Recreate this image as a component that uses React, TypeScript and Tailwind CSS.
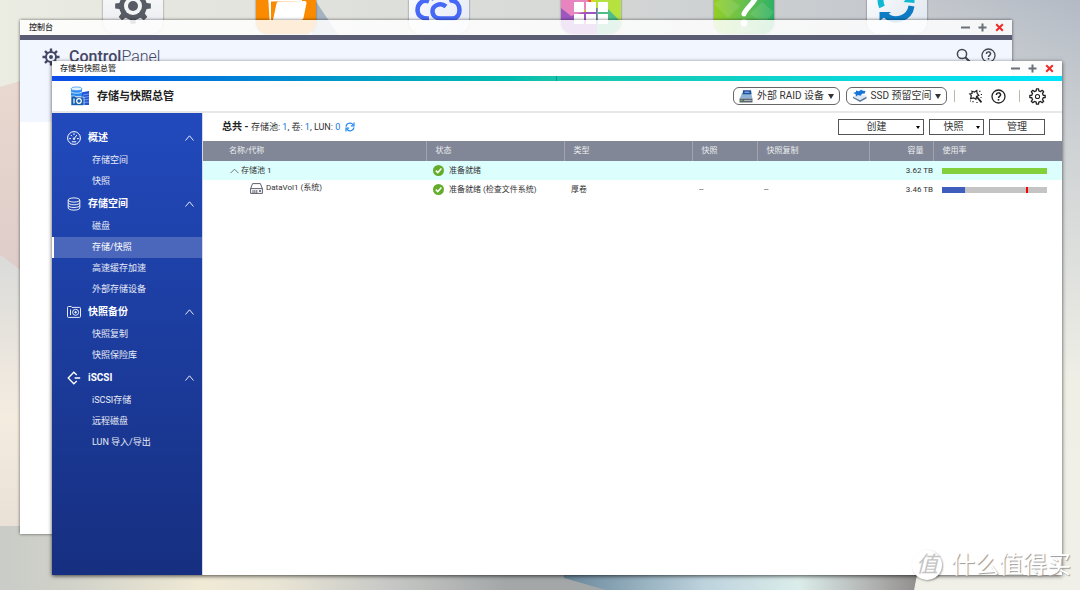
import React, { useState } from "react";
import clsx from "clsx";

interface NavGroup {
  title: string;
  icon: React.ReactNode;
  items: string[];
}

interface VolumeRow {
  name: string;
  kind: "pool" | "volume";
  status: string;
  type: string;
  snapshot: string;
  replica: string;
  capacity: string;
  used: number;
  threshold?: number;
}

// Outline of a cog centred on (c, c)
function gearPath(c: number, teeth: number, inner: number, outer: number) {
  const step = (Math.PI * 2) / teeth;
  const points: string[] = [];
  for (let i = 0; i < teeth; i++) {
    const a = i * step - Math.PI / 2;
    const corners = [
      [a - step * 0.28, inner],
      [a - step * 0.17, outer],
      [a + step * 0.17, outer],
      [a + step * 0.28, inner],
    ];
    corners.forEach(([angle, r]) => {
      points.push(`${(c + r * Math.cos(angle)).toFixed(2)} ${(c + r * Math.sin(angle)).toFixed(2)}`);
    });
  }
  return `M${points.join("L")}Z`;
}

const navGroups: NavGroup[] = [
  {
    title: "概述",
    icon: (
      <svg viewBox="0 0 14 14" className="size-[14px]" fill="none" stroke="currentColor">
        <circle cx="7" cy="7" r="6.4" />
        <path d="M2.6 7.6h1M10.4 7.6h1M4 4.2l.7.7M7 2.6v1M9.6 4.4L7.6 7" strokeLinecap="round" />
        <circle cx="7" cy="7.8" r=".8" />
        <path d="M4.8 10.8h4.4" />
      </svg>
    ),
    items: ["存储空间", "快照"],
  },
  {
    title: "存储空间",
    icon: (
      <svg viewBox="0 0 14 14" className="size-[14px]" fill="none" stroke="currentColor" strokeWidth="0.9">
        <ellipse cx="7" cy="3" rx="5.8" ry="2.1" />
        <path d="M1.2 3v8c0 1.200 2.600 2.100 5.800 2.100s5.800-.9 5.800-2.100V3M1.200 5.700c0 1.200 2.600 2.100 5.800 2.100s5.800-.9 5.800-2.100M1.200 8.400c0 1.200 2.600 2.100 5.800 2.100s5.800-.9 5.800-2.100" />
      </svg>
    ),
    items: ["磁盘", "存储/快照", "高速缓存加速", "外部存储设备"],
  },
  {
    title: "快照备份",
    icon: (
      <svg viewBox="0 0 14 14" className="size-[14px]" fill="none" stroke="currentColor" strokeWidth="0.9">
        <path d="M.5 2.800V11.500q0 .9.9.9h11.200q.9 0 .9-.9V3.300q0-.9-.9-.9H5L4.300 1.500H1.400q-.9 0-.9.9z" />
        <path d="M3.500 4.500v5.600" />
        <circle cx="8.600" cy="7.300" r="3" />
        <circle cx="8.600" cy="7.300" r=".8" fill="currentColor" />
      </svg>
    ),
    items: ["快照复制", "快照保险库"],
  },
  {
    title: "iSCSI",
    icon: (
      <svg viewBox="0 0 14 14" className="size-[14px]" fill="none" stroke="currentColor" strokeWidth="1.300">
        <path d="M9.800 4L6.800 1.200 1.200 7l5.600 5.800 3-2.800M7.600 7h5.600" />
      </svg>
    ),
    items: ["iSCSI存储", "远程磁盘", "LUN 导入/导出"],
  },
];

const rows: VolumeRow[] = [
  { name: "存储池 1", kind: "pool", status: "准备就绪", type: "", snapshot: "", replica: "", capacity: "3.62 TB", used: 100 },
  { name: "DataVol1 (系统)", kind: "volume", status: "准备就绪 (检查文件系统)", type: "厚卷", snapshot: "--", replica: "--", capacity: "3.46 TB", used: 22, threshold: 80 },
];

function Wallpaper() {
  return (
    <svg viewBox="0 0 1080 590" preserveAspectRatio="none" className="absolute inset-0 size-full" aria-hidden="true">
      <defs>
        <linearGradient id="sky" x1="0" x2="1" y1="0" y2="0">
          <stop offset="0" stopColor="#ebece2" />
          <stop offset="0.5" stopColor="#d8dad8" />
          <stop offset="0.85" stopColor="#c3c7cc" />
          <stop offset="1" stopColor="#b3bac5" />
        </linearGradient>
        <linearGradient id="haze" x1="0" x2="0" y1="0" y2="1">
          <stop offset="0" stopColor="#f1f0e8" stopOpacity="0" />
          <stop offset="0.35" stopColor="#e3e4e0" stopOpacity="0.75" />
          <stop offset="0.65" stopColor="#efefe6" />
          <stop offset="1" stopColor="#f1f0e8" />
        </linearGradient>
        <linearGradient id="sand" x1="0" x2="0" y1="0" y2="1">
          <stop offset="0" stopColor="#dadbda" />
          <stop offset="0.6" stopColor="#f5ece0" />
          <stop offset="1" stopColor="#e9e1d6" />
        </linearGradient>
        <linearGradient id="peach" x1="0" x2="0" y1="0" y2="1">
          <stop offset="0" stopColor="#ead9d0" />
          <stop offset="1" stopColor="#dccbc8" />
        </linearGradient>
        <linearGradient id="floor" x1="0" x2="1" y1="0" y2="0">
          <stop offset="0" stopColor="#c9ccc7" />
          <stop offset="0.08" stopColor="#d1d2c9" />
          <stop offset="0.22" stopColor="#f0ead5" />
          <stop offset="0.3" stopColor="#e9e5d5" />
          <stop offset="0.42" stopColor="#c8c9c6" />
          <stop offset="0.55" stopColor="#a3a7a8" />
          <stop offset="1" stopColor="#a3a7a8" />
        </linearGradient>
        <linearGradient id="lake" x1="0" x2="1" y1="0" y2="0">
          <stop offset="0" stopColor="#68869a" />
          <stop offset="0.4" stopColor="#bdd3dd" />
          <stop offset="0.66" stopColor="#dbedea" />
          <stop offset="0.85" stopColor="#b4b7b6" />
          <stop offset="1" stopColor="#908d8b" />
        </linearGradient>
      </defs>
      <rect width="1080" height="590" fill="url(#sky)" />
      <rect x="900" width="180" height="590" fill="url(#haze)" />
      <path d="M312 0h3l24 36h-27z" fill="#a5b3c1" />
      <path d="M0 255l60 45v226H0z" fill="url(#sand)" />
      <path d="M0 87l60-18v231L0 255z" fill="url(#peach)" />
      <path d="M0 526h920l-6 64H0z" fill="url(#floor)" />
      <path d="M562 560h358l-6 30H606l-42-12z" fill="url(#lake)" />
    </svg>
  );
}

function DesktopIcons() {
  const tile = "block size-[60px] rounded-xl shadow-[0_0_2px_rgba(0,0,0,0.6)] overflow-hidden";
  return (
    <div className="absolute -top-[26px] left-[103px] right-[153px] flex justify-between">
      <button className={clsx(tile, "bg-linear-to-b from-white to-[#e8eaee]")} aria-label="控制台">
        <svg viewBox="0 0 60 60">
          <path d={gearPath(30, 8, 14, 18)} fill="#565b64" transform="translate(0 2)" />
          <circle cx="30" cy="32" r="9" fill="#f4f5f7" />
          <circle cx="30" cy="32" r="5" fill="#565b64" />
        </svg>
      </button>
      <button className={clsx(tile, "bg-[#fa8a00]")} aria-label="File Station">
        <svg viewBox="0 0 60 60" fill="#fff">
          <path d="M20.500 29.500q.3-2 2.300-2l26-.5q2 0 1.700 2l-3 15q-.4 2-2.400 2H17z" />
          <path d="M12 20h7l3 4h24v3l-31 .5V46h-1.500z" />
        </svg>
      </button>
      <button className={clsx(tile, "bg-linear-to-br from-white to-[#e3e9f5]")} aria-label="myQNAPcloud">
        <svg viewBox="0 0 60 60" fill="none" stroke="#4669f7" strokeWidth="4.500">
          <path d="M20 27.500C13 25 8.500 30.500 8.500 36s4.500 9 11.500 8.500" />
          <path d="M37 32.500c-6-5-13.500-.5-13.500 4.500s3.500 7.500 8 7.500H44c4 0 6.500-4 6.500-8.500 0-5-3-9-8-9.500C40 17 26 16 22 26" />
        </svg>
      </button>
      <button className={tile} aria-label="App Center">
        <svg viewBox="0 0 60 60">
          <path d="M0 0h60v60H0z" fill="#e9d800" />
          <path d="M0 0h30v30z" fill="#e5534d" />
          <path d="M0 0l30 30L0 60z" fill="#e884c0" />
          <path d="M60 0v60L30 30z" fill="#b5e23f" />
          <path d="M0 34l10 8 26-8v26H0z" fill="#9d57bf" />
          <path d="M60 48L46 34H36v26h24z" fill="#50bc8a" />
          <path d="M13 15h10v11H13zM25 15h10v11H25zM37 15h10v11H37zM13 28h10v10H13zM25 28h10v10H25zM37 28h10v10H37zM13 40h10v10H13zM25 40h10v10H25zM37 40h10v10H37z" fill="#fff" />
        </svg>
      </button>
      <button className={clsx(tile, "bg-linear-to-r from-[#92cf21] to-[#29b163]")} aria-label="Helpdesk">
        <svg viewBox="0 0 60 60">
          <path d="M0 30l12-8 14 10-12 12zM36 40l12-12 12 10-10 12zM20 60l8-12 14 8z" fill="#fff" opacity=".1" />
          <path d="M18 16c2-10 26-10 25 4-1 8-11 14-13 20" fill="none" stroke="#fff" strokeWidth="5" strokeLinecap="round" />
          <circle cx="30" cy="49" r="3.500" fill="#fff" />
        </svg>
      </button>
      <button className={clsx(tile, "bg-linear-to-br from-white to-[#dde5ee]")} aria-label="同步">
        <svg viewBox="0 0 60 60" fill="none" strokeWidth="6">
          <path d="M15 33a15 15 0 0 1 28-13" stroke="#10b9d2" />
          <path d="M44.500 32a15.500 15.500 0 0 1-26 9" stroke="#0e7cc4" />
          <path d="M12.500 38H24l-11.500 9z" fill="#0e7cc4" />
          <path d="M47.500 16v13l-11-1z" fill="#10b9d2" />
        </svg>
      </button>
    </div>
  );
}

function WindowControls() {
  return (
    <div className="flex items-center gap-2">
      <button aria-label="最小化" className="text-[#6b7078]">
        <svg viewBox="0 0 9 9" className="size-[9px]" stroke="currentColor" strokeWidth="2"><path d="M0 4.500h9" /></svg>
      </button>
      <button aria-label="最大化" className="text-[#6b7078]">
        <svg viewBox="0 0 9 9" className="size-[9px]" stroke="currentColor" strokeWidth="2"><path d="M.5 4.500h8M4.500.5v8" /></svg>
      </button>
      <button aria-label="关闭" className="text-[#ee2b2b]">
        <svg viewBox="0 0 9 9" className="size-[9px]" stroke="currentColor" strokeWidth="2"><path d="M1.200 1.200l6.600 6.600M7.800 1.200L1.200 7.800" /></svg>
      </button>
    </div>
  );
}

function HelpIcon() {
  return (
    <svg viewBox="0 0 15 15" className="size-[15px]" fill="none" stroke="currentColor" strokeWidth="1.300">
      <circle cx="7.500" cy="7.500" r="6.500" />
      <path d="M5.400 6c0-2.800 4.200-2.800 4.200-.2 0 1.500-2.100 1.600-2.100 3.200" strokeWidth="1.500" />
      <path d="M7.500 10v1.600" strokeWidth="1.600" />
    </svg>
  );
}

function Caret() {
  return <span className="border-x-[3px] border-t-[5px] border-x-transparent border-t-[#333]" />;
}

function ControlPanelWindow() {
  return (
    <section className="absolute bottom-[56px] left-5 right-[68px] top-5 flex flex-col shadow-[0_0_3px_rgba(0,0,0,0.6)]">
      <header className="flex h-[15px] shrink-0 items-center justify-between bg-white/85 pl-[9px] pr-2">
        <h2 className="text-[8px] font-medium leading-none">控制台</h2>
        <WindowControls />
      </header>
      <div className="h-[5px] shrink-0 bg-[#5a5c74]" />
      <div className="flex h-[82px] shrink-0 items-start justify-between bg-[#f1f6ff] pl-[22px] pr-4 pt-[7px] text-[#454766]">
        <div className="flex items-center gap-[9px]">
          <svg viewBox="0 0 18 18" className="size-[18px]" fill="none">
            <path d={gearPath(9, 8, 6, 8.6)} fill="currentColor" />
            <circle cx="9" cy="9" r="4" fill="#f1f6ff" />
            <circle cx="9" cy="9" r="2" fill="currentColor" />
          </svg>
          <h1 className="text-base leading-5">
            <span className="font-medium">Control</span>
            <span className="font-light">Panel</span>
          </h1>
        </div>
        <div className="flex items-center gap-[10px] pt-px text-[#44474f]">
          <button aria-label="搜索">
            <svg viewBox="0 0 15 15" className="size-[15px]" fill="none" stroke="currentColor" strokeWidth="1.500">
              <circle cx="6" cy="6" r="4.600" />
              <path d="M9.300 9.300l4.500 4.500" strokeWidth="2" />
            </svg>
          </button>
          <button aria-label="帮助"><HelpIcon /></button>
        </div>
      </div>
      <div className="flex-1 bg-white" />
    </section>
  );
}

function Toolbar() {
  const pill = "flex h-[18px] items-center rounded-[6px] border border-[#666] bg-white px-[5px] text-[10px] leading-none text-[#333]";
  return (
    <div className="flex h-8 shrink-0 items-center justify-between border-b-2 border-[#e8e8e8] bg-white pl-[18px] pr-4">
      <div className="flex items-center gap-[7px]">
        <svg viewBox="0 0 20 20" className="size-5">
          <path d="M11 6.500l8-1.500v14h-8z" fill="#2353d4" />
          <path d="M13 9l6-1M13 11.500l6-.8M13 14l6-.6M13 16.500l6-.4" stroke="#8fb6ff" strokeWidth=".7" />
          <path d="M1 2.500v8h11v-8z" fill="#2d8bf0" />
          <path d="M1 6c2 1.600 9 1.600 11 0" stroke="#bfe0ff" fill="none" />
          <ellipse cx="6.500" cy="2.800" rx="5.500" ry="1.900" fill="#e4f3ff" stroke="#3a97f3" strokeWidth=".8" />
          <path d="M1 10h4l1 1h8v8.500H1z" fill="#1560ae" stroke="#fff" strokeWidth=".6" />
          <path d="M4 12.500v5" stroke="#fff" strokeWidth="1.200" />
          <circle cx="9" cy="15" r="2.300" fill="none" stroke="#fff" strokeWidth="1.200" />
        </svg>
        <h1 className="text-[11px] font-bold leading-none text-[#222]">存储与快照总管</h1>
      </div>
      <div className="flex items-center">
        <button className={clsx(pill, "w-[107px] justify-between")} aria-haspopup="menu">
          <svg viewBox="0 0 14 13" className="h-[13px] w-[14px]">
            <path d="M3 3h9l1.500 5.500H.8z" fill="#8fb4d6" />
            <path d="M4 .3h8l.5 4h-9z" fill="#1b4f9c" />
            <path d="M5.500 2.200h5" stroke="#a9c6ea" />
            <path d="M.5 8.500h13v4H.5z" fill="#5b6672" />
            <path d="M5 10.500h7.500" stroke="#aab4bd" />
            <path d="M1.500 10.500h2" stroke="#67c43a" />
          </svg>
          外部 RAID 设备
          <Caret />
        </button>
        <button className={clsx(pill, "ml-[6px] w-[101px] justify-between")} aria-haspopup="menu">
          <svg viewBox="0 0 15 14" className="h-[14px] w-[15px]">
            <path d="M1 9l7 4 6.500-3.500V7.500L8 11 1 7.500z" fill="#5f7c9c" />
            <path d="M1 7.500l7-2.500 6.500 2L8 11z" fill="#dbe7f2" />
            <path d="M1 4l3-1V1.500l3 .8L9 .8l2 1 2.500.2-.8 2.500-2.700.3-1.500 2L6 6 4 7.500 3.500 5z" fill="#1673d8" />
          </svg>
          SSD 预留空间
          <Caret />
        </button>
        <span className="ml-[7px] h-3 w-px bg-[#bdb9a8]" />
        <button className="ml-[13px] text-[#222]" aria-label="工具">
          <svg viewBox="0 0 15 15" className="size-[15px]" fill="none" stroke="currentColor" strokeWidth="1.200">
            <path d="M4 2.200l2.400.8 2.400-1.400.3 2.700 1.700 2-2.200 1.200-.7 2.700-2.300-1.400-3 .8.700-2.900L1.800 4.900l2.200-.3z" />
            <path d="M8.500 7.500l5 5.800" strokeWidth="1.800" />
            <path d="M11.800 1.700v1.200M12.800 5.500h1.200M12.500 8.500h1M5 12v1.200M2 12h1M9 13v1" />
          </svg>
        </button>
        <button className="ml-2 text-[#222]" aria-label="帮助"><HelpIcon /></button>
        <span className="ml-[13px] h-3 w-px bg-[#bdb9a8]" />
        <button className="ml-[9px] text-[#222]" aria-label="设置">
          <svg viewBox="0 0 18 18" className="size-[17px]" fill="none" stroke="currentColor" strokeWidth="1.400" strokeLinejoin="round">
            <path d={gearPath(9, 8, 6.2, 8.2)} />
            <circle cx="9" cy="9" r="2.200" strokeWidth="1.100" />
          </svg>
        </button>
      </div>
    </div>
  );
}

function Sidebar() {
  const [active, setActive] = useState("存储/快照");

  return (
    <nav className="w-[150px] shrink-0 bg-linear-to-b from-[#224abd] to-[#162f80] pt-[13px] text-white">
      {navGroups.map((group) => (
        <div key={group.title}>
          <button className="flex h-6 w-full items-center pl-[15px] pr-2 text-[10px] font-bold leading-none">
            {group.icon}
            <span className="ml-[7px] flex-1 text-left leading-3">{group.title}</span>
            <svg viewBox="0 0 9 6" className="h-[6px] w-[9px]" fill="none" stroke="currentColor" strokeWidth="0.9">
              <path d="M.5 5.500l4-4.700 4 4.700" />
            </svg>
          </button>
          <ul>
            {group.items.map((item) => (
              <li key={item}>
                <a
                  href="#"
                  onClick={() => setActive(item)}
                  className={clsx(
                    "flex h-[21px] items-center border-l-2 pl-[38px] text-[9px] leading-none",
                    item === active ? "border-white bg-white/20" : "border-transparent text-white/90"
                  )}
                >
                  {item}
                </a>
              </li>
            ))}
          </ul>
        </div>
      ))}
    </nav>
  );
}

function Summary() {
  const action = "flex h-4 items-center border border-[#555] bg-white px-[3px] text-[10px] leading-none text-[#333]";
  return (
    <div className="flex h-7 shrink-0 items-center justify-between pl-[19px] pr-[17px]">
      <div className="flex items-center gap-[5px] text-[9px] leading-none">
        <p>
          <span className="text-[10px] font-bold text-[#222]">总共 - </span>
          存储池: <span className="text-[#1773e0]">1</span>, 卷: <span className="text-[#1773e0]">1</span>, LUN:{" "}
          <span className="text-[#1773e0]">0</span>
        </p>
        <button aria-label="刷新" className="text-[#1f87f0]">
          <svg viewBox="0 0 10 10" className="size-[10px]" fill="none" stroke="currentColor" strokeWidth="1.200">
            <path d="M1 4.600A4 4 0 0 1 8.200 2.800M9 5.400A4 4 0 0 1 1.800 7.200" />
            <path d="M9 .5v3.300H5.800M1 9.500V6.200h3.200" />
          </svg>
        </button>
      </div>
      <div className="flex gap-[5px]">
        <button className={clsx(action, "w-[86px]")} aria-haspopup="menu">
          <span className="flex-1 pr-[5px]">创建</span>
          <span className="border-x-2 border-t-[3px] border-x-transparent border-t-black" />
        </button>
        <button className={clsx(action, "w-[55px]")} aria-haspopup="menu">
          <span className="flex-1 pr-[2px]">快照</span>
          <span className="border-x-2 border-t-[3px] border-x-transparent border-t-black" />
        </button>
        <button className={clsx(action, "w-[56px] justify-center")}>管理</button>
      </div>
    </div>
  );
}

function UsageBar({ row }: { row: VolumeRow }) {
  return (
    <div className="relative h-[6px] w-[105px] bg-[#c4c4c4]" role="meter" aria-label={`${row.name} 使用率`} aria-valuenow={row.used}>
      <div
        className={clsx("h-full", row.kind === "pool" ? "bg-[#84d03c]" : "bg-[#3f5dbd]")}
        style={{ width: `${row.used}%` }}
      />
      {row.threshold && <span className="absolute top-0 h-full w-[2px] bg-[#f00]" style={{ left: `${row.threshold}%` }} />}
    </div>
  );
}

function VolumeTable() {
  const head = "border-r border-[#a0a5b1] pl-[9px] text-left font-normal";
  return (
    <table className="w-full table-fixed border-collapse text-[8px] leading-none">
      <colgroup>
        <col />
        <col className="w-[138px]" />
        <col className="w-[128px]" />
        <col className="w-[65px]" />
        <col className="w-[112px]" />
        <col className="w-[64px]" />
        <col className="w-[129px]" />
      </colgroup>
      <thead>
        <tr className="h-5 bg-[#818796] text-[#eceef2]">
          <th className="border-r border-[#a0a5b1] pl-[26px] text-left font-normal">名称/代称</th>
          <th className={head}>状态</th>
          <th className={head}>类型</th>
          <th className={head}>快照</th>
          <th className={head}>快照复制</th>
          <th className="border-r border-[#a0a5b1] pr-[9px] text-right font-normal">容量</th>
          <th className="pl-[9px] text-left font-normal">使用率</th>
        </tr>
      </thead>
      <tbody className="text-[#333]">
        {rows.map((row) => (
          <tr key={row.name} className={clsx("h-[19px]", row.kind === "pool" && "bg-[#dcfffd]")}>
            <td>
              {row.kind === "pool" ? (
                <div className="flex items-center gap-[2px] pl-[27px]">
                  <svg viewBox="0 0 9 6" className="h-[6px] w-[9px]" fill="none" stroke="#666" strokeWidth="0.9">
                    <path d="M.5 5.200l4-4 4 4" />
                  </svg>
                  {row.name}
                </div>
              ) : (
                <div className="flex items-center gap-[3px] pb-[3px] pl-[47px]">
                  <svg viewBox="0 0 13 11" className="h-[11px] w-[13px]" fill="none" stroke="#4a4f5c" strokeWidth="0.9">
                    <path d="M.6 5.600L2.600.6h7.800l2 5v4.800H.6zM.6 5.600h11.800" />
                    <path d="M3 7v3.400M4.900 7v3.400M6.800 7v3.400" />
                    <path d="M9 8h2" strokeWidth="1.600" />
                  </svg>
                  {row.name}
                </div>
              )}
            </td>
            <td className="pl-[7px]">
              <div className="flex items-center gap-[5px] whitespace-nowrap">
                <svg viewBox="0 0 11 11" className="size-[11px] shrink-0">
                  <circle cx="5.500" cy="5.500" r="5.500" fill="#64ad2b" />
                  <path d="M2.800 5.600l2 2 3.600-4" fill="none" stroke="#fff" strokeWidth="1.500" />
                </svg>
                {row.status}
              </div>
            </td>
            <td className="pl-[7px]">{row.type}</td>
            <td className="pl-[7px]">{row.snapshot}</td>
            <td className="pl-[7px]">{row.replica}</td>
            <td className="text-right">{row.capacity}</td>
            <td className="pl-[9px]"><UsageBar row={row} /></td>
          </tr>
        ))}
      </tbody>
    </table>
  );
}

function StorageWindow() {
  return (
    <section className="absolute bottom-[15px] left-[52px] right-[18px] top-[61px] flex flex-col shadow-[0_1px_4px_rgba(0,0,0,0.7)]">
      <header className="flex h-[15px] shrink-0 items-center justify-between bg-white/95 pl-2 pr-2">
        <h2 className="text-[8px] font-medium leading-none">存储与快照总管</h2>
        <WindowControls />
      </header>
      <div className="flex h-[5px] shrink-0 bg-linear-to-r from-[#114be8] via-[#17c5a8] to-[#00e4fb]">
        <span className="w-1/2 border-r border-[#1590a8]" />
      </div>
      <Toolbar />
      <div className="flex min-h-0 flex-1 bg-white">
        <Sidebar />
        <main className="min-w-0 flex-1 border-l border-[#d5d9e4]">
          <Summary />
          <VolumeTable />
        </main>
      </div>
    </section>
  );
}

function Watermark() {
  return (
    <div className="pointer-events-none absolute bottom-[10px] right-[9px] flex items-center gap-[9px] text-white">
      <span className="flex size-[30px] items-center justify-center rounded-full bg-white text-[22px] italic leading-none text-[#c4c4c4] shadow-[1px_1px_2px_rgba(0,0,0,0.35)]">
        值
      </span>
      <span className="text-[24px] leading-none [text-shadow:1px_1px_1px_#999]">什么值得买</span>
    </div>
  );
}

export default function App() {
  return (
    <div
      lang="zh-CN"
      className="relative h-screen w-full overflow-hidden font-[Roboto,'Noto_Sans_CJK_SC',sans-serif] text-[#333]"
    >
      <Wallpaper />
      <DesktopIcons />
      <ControlPanelWindow />
      <StorageWindow />
      <Watermark />
    </div>
  );
}
